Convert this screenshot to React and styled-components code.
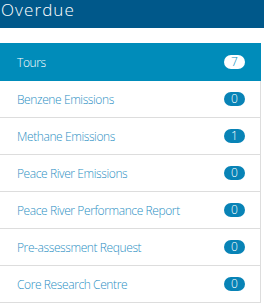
import React from "react";
import styled, { createGlobalStyle } from "styled-components";

const Global = createGlobalStyle`
  html, body { margin: 0; padding: 0; background: #ffffff; }
  body { font-family: "Open Sans", "Noto Sans", sans-serif; }
  * { box-sizing: border-box; }
`;

const Page = styled.div`
  width: 264px;
  height: 306px;
  overflow: hidden;
  background: #ffffff;
`;

const Header = styled.div`
  height: 28px;
  background: #00588a;
  color: #ffffff;
  font-size: 17px;
  font-weight: 300;
  letter-spacing: 1.1px;
  line-height: 20px;
  padding-left: 1px;
  margin-bottom: 15px;
`;

const List = styled.ul`
  list-style: none;
  margin: 0 0 0 -1px;
  padding: 0;
  width: 262px;
`;

const Item = styled.li`
  display: flex;
  align-items: center;
  justify-content: space-between;
  height: 38px;
  margin-bottom: -1px;
  padding: 0 15px 0 17px;
  font-size: 12px;
  font-weight: 300;
  letter-spacing: -0.4px;
  border: 1px solid ${(p) => (p.$active ? "#008cba" : "#dddddd")};
  background: ${(p) => (p.$active ? "#008cba" : "#ffffff")};
  color: ${(p) => (p.$active ? "#ffffff" : "#2b8fc3")};
  position: relative;
  z-index: ${(p) => (p.$active ? 2 : 1)};
`;

const Badge = styled.span`
  min-width: 21px;
  height: 14px;
  padding: 0 6px;
  border-radius: 7px;
  display: inline-flex;
  align-items: center;
  justify-content: center;
  font-size: 12px;
  font-weight: 300;
  letter-spacing: 0;
  line-height: 14px;
  background: ${(p) => (p.$active ? "#ffffff" : "#0883b6")};
  color: ${(p) => (p.$active ? "#008cba" : "#ffffff")};
`;

const items = [
  { label: "Tours", count: 7, active: true },
  { label: "Benzene Emissions", count: 0 },
  { label: "Methane Emissions", count: 1 },
  { label: "Peace River Emissions", count: 0 },
  { label: "Peace River Performance Report", count: 0 },
  { label: "Pre-assessment Request", count: 0 },
  { label: "Core Research Centre", count: 0 },
];

export default function App() {
  return (
    <Page>
      <Global />
      <Header>Overdue</Header>
      <List>
        {items.map((it) => (
          <Item key={it.label} $active={it.active}>
            <span>{it.label}</span>
            <Badge $active={it.active}>{it.count}</Badge>
          </Item>
        ))}
      </List>
    </Page>
  );
}
